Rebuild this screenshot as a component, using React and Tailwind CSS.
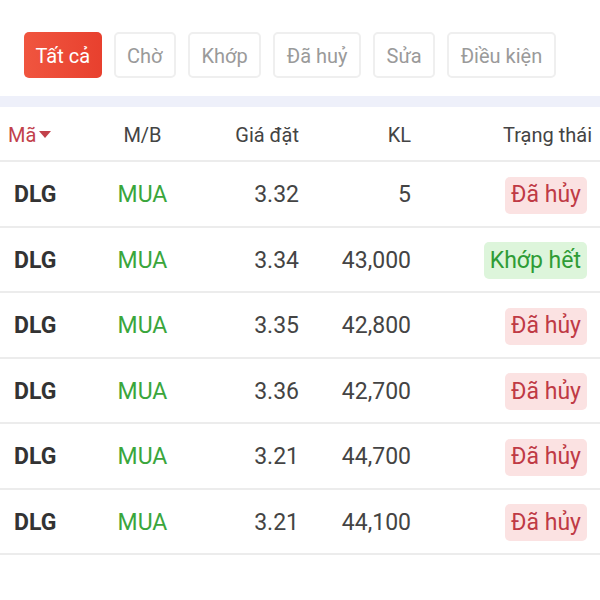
import React, { useState } from "react";

const tabs = ["Tất cả", "Chờ", "Khớp", "Đã huỷ", "Sửa", "Điều kiện"];

const orders = [
  { code: "DLG", side: "MUA", price: "3.32", qty: "5", status: "cancel" },
  { code: "DLG", side: "MUA", price: "3.34", qty: "43,000", status: "done" },
  { code: "DLG", side: "MUA", price: "3.35", qty: "42,800", status: "cancel" },
  { code: "DLG", side: "MUA", price: "3.36", qty: "42,700", status: "cancel" },
  { code: "DLG", side: "MUA", price: "3.21", qty: "44,700", status: "cancel" },
  { code: "DLG", side: "MUA", price: "3.21", qty: "44,100", status: "cancel" },
];

const cols = "grid grid-cols-[95px_95px_109px_112px_1fr] items-center";

const App = () => {
  const [active, setActive] = useState(0);

  return (
    <div
      className="w-[600px] h-[600px] bg-white overflow-hidden"
      style={{ fontFamily: "Roboto, 'Noto Sans', sans-serif" }}
    >
      {/* tabs */}
      <div className="flex gap-[12px] pl-[24px] pt-[32px] pb-[18px]">
        {tabs.map((t, idx) => (
          <button
            key={t}
            onClick={() => setActive(idx)}
            className={`h-[46px] px-[11.5px] pt-[2px] rounded-[5px] text-[20px] leading-none ${
              active === idx
                ? "bg-gradient-to-r from-[#f0553f] to-[#e8402e] text-white"
                : "border-2 border-[#efefef] text-[#9a9a9a]"
            }`}
          >
            {t}
          </button>
        ))}
      </div>

      <div className="h-[11px] bg-[#eef0fa]" />

      {/* header */}
      <div className={`${cols} h-[55px] pt-[2px] border-b-2 border-[#ececec] text-[20px] text-[#444]`}>
        <div className="pl-[8px] flex items-center text-[#c2414b]">
          Mã
          <span className="ml-[3px] w-0 h-0 border-l-[6px] border-r-[6px] border-t-[7px] border-l-transparent border-r-transparent border-t-[#c2414b]" />
        </div>
        <div className="text-center">M/B</div>
        <div className="text-right">Giá đặt</div>
        <div className="text-right">KL</div>
        <div className="text-right pr-[8px]">Trạng thái</div>
      </div>

      {/* rows */}
      {orders.map((o, idx) => (
        <div
          key={idx}
          className={`${cols} h-[65.5px] pt-[3px] border-b-2 border-[#ececec] text-[23px]`}
        >
          <div className="pl-[14px] font-bold text-[#333]">{o.code}</div>
          <div className="text-center text-[#3aa63c]">{o.side}</div>
          <div className="text-right text-[#444]">{o.price}</div>
          <div className="text-right text-[#444]">{o.qty}</div>
          <div className="flex justify-end pr-[13px]">
            {o.status === "cancel" ? (
              <span className="h-[37px] px-[6px] flex items-center rounded-[5px] bg-[#fbe2e2] text-[#bf3a45]">
                Đã hủy
              </span>
            ) : (
              <span className="h-[37px] px-[6px] flex items-center rounded-[5px] bg-[#ddf5db] text-[#2f9c36]">
                Khớp hết
              </span>
            )}
          </div>
        </div>
      ))}
    </div>
  );
};

export default App;
